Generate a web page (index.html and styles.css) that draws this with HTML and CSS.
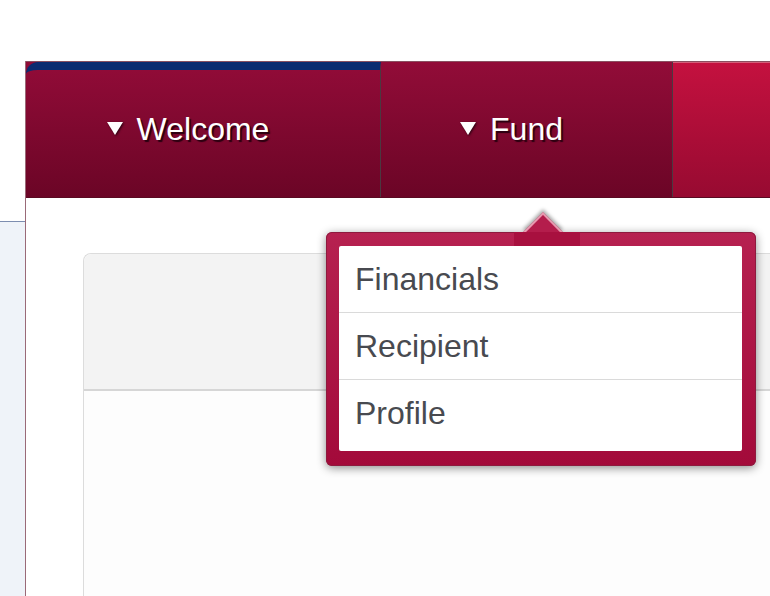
FILE: index.html
```html
<!DOCTYPE html>
<html>
<head>
<meta charset="utf-8">
<link rel="stylesheet" href="styles.css">
</head>
<body>
<div class="page">
  <aside class="gutter">
    <div class="gutter-top"></div>
    <div class="gutter-fill"></div>
  </aside>
  <main class="main">
    <nav class="nav">
      <div class="tab tab-active"><span class="tab-label">Welcome</span></div>
      <div class="tab tab-fund"><span class="tab-label">Fund</span></div>
      <div class="tab tab-rest"></div>
    </nav>
    <section class="content">
      <div class="card">
        <div class="card-header"></div>
        <div class="card-body"></div>
      </div>
    </section>
  </main>
  <div class="popup">
    <div class="caret"></div>
    <div class="caret-base"></div>
    <ul class="menu">
      <li class="menu-item">Financials</li>
      <li class="menu-item">Recipient</li>
      <li class="menu-item">Profile</li>
    </ul>
  </div>
</div>
</body>
</html>
```

FILE: styles.css
```css
html, body {
  margin: 0;
  padding: 0;
  background: #ffffff;
  overflow: hidden;
}
body {
  font-family: "Liberation Sans", Arial, sans-serif;
}
.page {
  position: relative;
  display: flex;
  padding-top: 61px;
  height: 535px;
}
.gutter {
  width: 25px;
  flex: none;
  display: flex;
  flex-direction: column;
}
.gutter-top {
  height: 160px;
  background: #ffffff;
}
.gutter-fill {
  flex: 1;
  border-top: 1px solid #7d8db0;
  background: #eff3f9;
}
.main {
  flex: 1;
  border-left: 1px solid #9a6a78;
  display: flex;
  flex-direction: column;
  min-width: 0;
}
.nav {
  display: flex;
  height: 135px;
  border-top: 1px solid #8a5060;
  border-bottom: 1px solid #5a0a22;
  background: linear-gradient(#900b37, #6c0527);
}
.tab {
  position: relative;
  display: flex;
  align-items: center;
  justify-content: center;
  box-sizing: border-box;
}
.tab-active {
  width: 355px;
  border-top: 8px solid #0b2b70;
  border-top-left-radius: 12px;
  border-right: 1px solid #4c3840;
  background: linear-gradient(#900b37, #6b0526);
  padding-bottom: 9px;
}
.tab-fund {
  width: 292px;
  border-right: 1px solid #4c3840;
  padding-bottom: 1px;
  background: linear-gradient(#920c38, #6b0526);
}
.tab-rest {
  flex: 1;
  background: linear-gradient(#c4113f, #970a31);
  border-top: 1px solid #d4607a;
}
.tab-label {
  position: relative;
  color: #ffffff;
  font-size: 32px;
  line-height: 36px;
  text-shadow: 2px 2px 1px #2a0010;
}
.tab-label::before {
  content: "";
  position: absolute;
  left: -30px;
  top: 11px;
  width: 0;
  height: 0;
  border-left: 8px solid transparent;
  border-right: 8px solid transparent;
  border-top: 13px solid #ffffff;
  filter: drop-shadow(1px 1px 1px #2a0010);
}
.content {
  flex: 1;
  padding: 55px 0 0 57px;
  background: #ffffff;
  overflow: hidden;
}
.card {
  border: 1px solid #dcdcdc;
  border-right: none;
  border-top-left-radius: 8px;
  height: 400px;
  background: #fdfdfd;
}
.card-header {
  height: 135px;
  background: #f3f3f3;
  border-bottom: 2px solid #d6d6d6;
  border-top-left-radius: 8px;
}
.popup {
  position: absolute;
  left: 326px;
  top: 232px;
  width: 430px;
  height: 234px;
  box-sizing: border-box;
  padding: 14px 14px 15px 13px;
  border-radius: 6px;
  background: linear-gradient(#b62150, #a30a3a);
  box-shadow: 0 2px 10px rgba(0, 0, 0, 0.45), inset 0 0 0 1px #8e1a3e;
}
.caret {
  position: absolute;
  left: 203px;
  top: -20px;
  width: 28px;
  height: 28px;
  background: #b41d4c;
  border-top: 2px solid #e79ab0;
  border-left: 2px solid #e79ab0;
  box-sizing: border-box;
  transform-origin: center;
  transform: translateY(6px) rotate(45deg);
  box-shadow: -2px -2px 4px rgba(0, 0, 0, 0.35);
}
.caret-base {
  position: absolute;
  left: 188px;
  top: 0;
  width: 66px;
  height: 14px;
  background: #a8103f;
}
.menu {
  position: relative;
  list-style: none;
  margin: 0;
  padding: 0;
  background: #ffffff;
  border-radius: 2px;
  height: 205px;
}
.menu-item {
  height: 67px;
  box-sizing: border-box;
  padding: 13px 0 0 16px;
  font-size: 32px;
  line-height: 40px;
  color: #484a50;
  border-bottom: 1px solid #dadada;
}
.menu-item:last-child {
  border-bottom: none;
}
```
